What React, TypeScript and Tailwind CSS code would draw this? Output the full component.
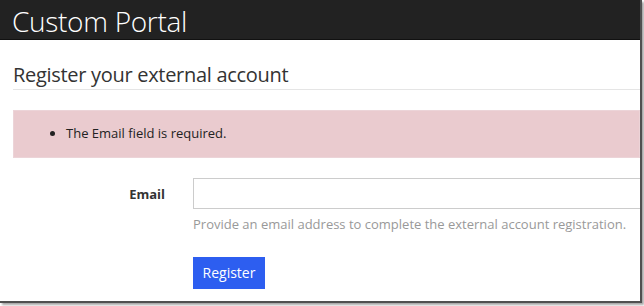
export default function App() {
  return (
    <div className="w-[644px] h-[306px] bg-white overflow-hidden" style={{ fontFamily: '"Open Sans", sans-serif' }}>
      <div className="w-[642px] h-[303px] border-r-2 border-b-2 border-[#505050] shadow-[2px_2px_2px_rgba(0,0,0,0.35)] overflow-hidden bg-white">
        <header className="h-10 bg-[#222222] border-b border-[#111] flex items-center px-[12px]">
          <h1 className="text-[28px] font-light text-white leading-none tracking-[-0.3px] pt-[2px]">Custom Portal</h1>
        </header>

        <div className="pl-[13px]">
          <h2 className="mt-[22px] text-[20px] tracking-[-0.3px] text-[#333] leading-[26px] pb-[1px] border-b border-[#e5e5e5]">
            Register your external account
          </h2>

          <div className="mt-[20px] h-[48px] bg-[#eacbcf] border border-[#ecd4d8] flex items-center">
            <ul className="list-disc pl-[52px] text-[13px] text-[#222]">
              <li>The Email field is required.</li>
            </ul>
          </div>

          <form className="mt-[20px] flex">
            <label className="w-[152px] text-right text-[13px] font-bold text-[#333] pt-[7px]">Email</label>
            <div className="flex-1 min-w-0 pl-[28px]">
              <input type="text" className="block w-[460px] h-[31px] border border-[#cccccc] bg-white" />
              <p className="mt-[6px] text-[13px] text-[#999]">
                Provide an email address to complete the external account registration.
              </p>
              <button type="button" className="mt-[22px] w-[72px] h-[32px] bg-[#2d5ef0] text-white text-[14px]">
                Register
              </button>
            </div>
          </form>
        </div>
      </div>
    </div>
  );
}
